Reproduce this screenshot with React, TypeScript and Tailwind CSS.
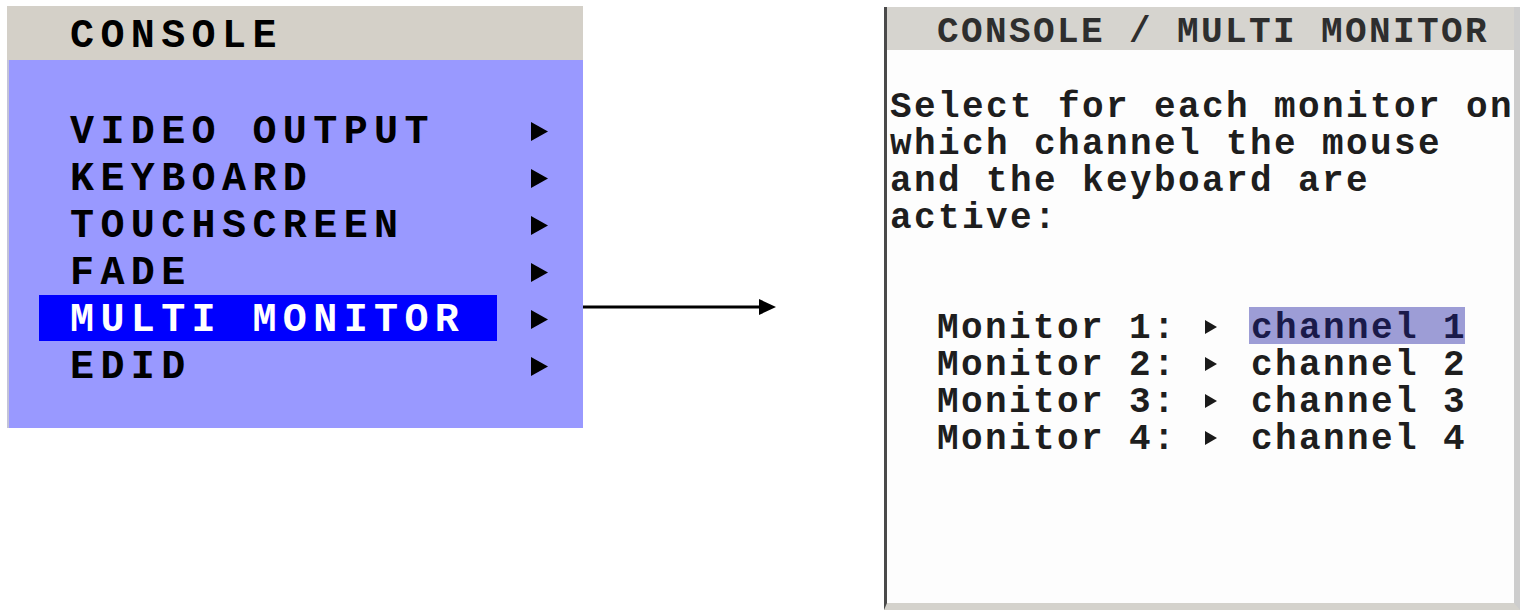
import React from "react";

const mono = { fontFamily: '"Courier New", "Liberation Mono", monospace' };

function Tri({ w = 16, h = 18, color = "#000" }: { w?: number; h?: number; color?: string }) {
  return (
    <svg width={w} height={h} viewBox={`0 0 ${w} ${h}`}>
      <polygon points={`0,0 ${w},${h / 2} 0,${h}`} fill={color} />
    </svg>
  );
}

const items = ["VIDEO OUTPUT", "KEYBOARD", "TOUCHSCREEN", "FADE", "MULTI MONITOR", "EDID"];

export default function App() {
  return (
    <div className="w-[1526px] h-[610px] bg-white flex items-start overflow-hidden" style={mono}>
      {/* Left OSD menu */}
      <div className="ml-[7px] mt-[6px] w-[576px] flex flex-col">
        <div className="h-[54px] bg-[#d4d0c8] flex items-center pl-[63px]">
          <span className="text-[40px] font-bold tracking-[6.4px] text-black leading-none translate-y-[4px]">CONSOLE</span>
        </div>
        <div className="h-[368px] bg-[#9999ff] border-l-2 border-[#c4c4d8] pt-[46px] flex flex-col">
          {items.map((it) => {
            const sel = it === "MULTI MONITOR";
            return (
              <div key={it} className="h-[47px] flex items-center">
                <div
                  className={`ml-[30px] w-[458px] h-[46px] pl-[31px] flex items-center ${
                    sel ? "bg-[#0000ff] text-white" : "text-black"
                  }`}
                >
                  <span className="text-[40px] font-bold tracking-[6.4px] leading-none whitespace-pre translate-y-[3px]">{it}</span>
                </div>
                <div className="ml-[34px] flex items-center translate-y-[2px]">
                  <Tri w={17} h={19} />
                </div>
              </div>
            );
          })}
        </div>
      </div>

      {/* Connecting arrow */}
      <svg className="mt-[297px] shrink-0" width={193} height={20} viewBox="0 0 193 20">
        <line x1={0} y1={10} x2={180} y2={10} stroke="#000" strokeWidth={3} />
        <polygon points="176,2 193,10 176,18" fill="#000" />
      </svg>

      {/* Right OSD screen */}
      <div className="ml-[108px] mt-[7px] w-[636px] h-[603px] shrink-0 bg-[#fdfdfd] border-l-[3px] border-l-[#4a4a4a] border-r-[6px] border-r-[#cdcdcd] border-b-[7px] border-b-[#d4d2cc] flex flex-col">
        <div className="h-[43px] bg-[#d6d4cf] flex items-center pl-[50px]">
          <span className="text-[36px] font-bold tracking-[2.4px] text-[#2e2e2e] leading-none whitespace-pre translate-y-[4px]">
            CONSOLE / MULTI MONITOR
          </span>
        </div>
        <div className="pl-[3px] pt-[39px] text-[36px] font-bold tracking-[2.4px] leading-[37px] text-[#1e1e1e] whitespace-pre">
          <div>Select for each monitor on</div>
          <div>which channel the mouse</div>
          <div>and the keyboard are</div>
          <div>active:</div>
        </div>
        <div className="pl-[50px] mt-[70px] flex flex-col text-[36px] font-bold tracking-[2.4px] leading-[37px] text-[#1e1e1e]">
          {[1, 2, 3, 4].map((n) => (
            <div key={n} className="h-[37px] flex items-center whitespace-pre">
              <span className="w-[240px] translate-y-[3px]">{`Monitor ${n}:`}</span>
              <span className="w-[72px] flex items-center justify-center pr-[4px] translate-y-[1px]">
                <Tri w={12} h={14} color="#1a1a1a" />
              </span>
              <span className={`h-[37px] flex items-center pl-[2px] w-[216px] ${n === 1 ? "bg-[#9d9dd6] text-[#1a1a4a]" : ""}`}>
                <span className="translate-y-[3px]">{`channel ${n}`}</span>
              </span>
            </div>
          ))}
        </div>
      </div>
    </div>
  );
}
